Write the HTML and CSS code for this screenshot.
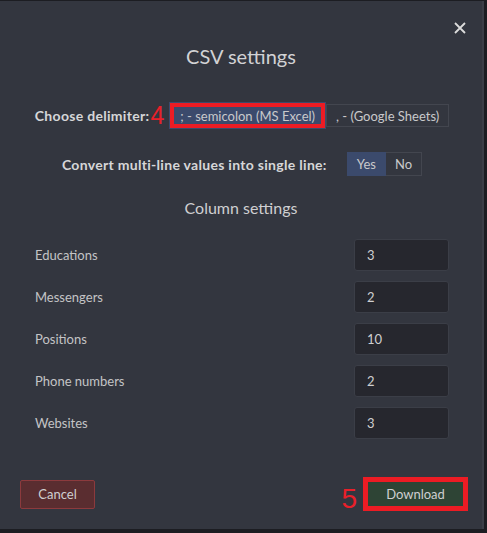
FILE: index.html
```html
<!DOCTYPE html>
<html lang="en">
<head>
    <meta charset="UTF-8">
    <meta name="viewport" content="width=device-width, initial-scale=1.0">
    <title>CSV settings</title>
    <link rel="stylesheet" href="styles.css">
</head>
<body>
    <div class="modal">
        <div class="modal-top">
            <button class="close" title="Close">
                <svg width="12" height="12" viewBox="0 0 12 12"><path d="M1 1 L11 11 M11 1 L1 11" stroke="#dcdcdc" stroke-width="1.8" fill="none"/></svg>
            </button>
        </div>
        <h2 class="title">CSV settings</h2>

        <div class="option-row delimiter-row">
            <span class="option-label">Choose delimiter:</span>
            <span class="mark">4</span>
            <div class="btn-group">
                <button class="seg active marked">; - semicolon (MS Excel)</button>
                <button class="seg">, - (Google Sheets)</button>
            </div>
        </div>

        <div class="option-row toggle-row">
            <span class="option-label">Convert multi-line values into single line:</span>
            <div class="btn-group bordered">
                <button class="seg active">Yes</button>
                <button class="seg">No</button>
            </div>
        </div>

        <h3 class="subtitle">Column settings</h3>

        <div class="columns">
            <div class="col-row"><label>Educations</label><input type="text" value="3"></div>
            <div class="col-row"><label>Messengers</label><input type="text" value="2"></div>
            <div class="col-row"><label>Positions</label><input type="text" value="10"></div>
            <div class="col-row"><label>Phone numbers</label><input type="text" value="2"></div>
            <div class="col-row"><label>Websites</label><input type="text" value="3"></div>
        </div>

        <div class="footer">
            <button class="btn cancel">Cancel</button>
            <div class="footer-right">
                <span class="mark">5</span>
                <button class="btn download">Download</button>
            </div>
        </div>
    </div>
</body>
</html>
```

FILE: styles.css
```css
body {
    margin: 0;
    background-color: #1c1d22;
    font-family: Lato, "Open Sans", sans-serif;
    color: #c4c4c6;
}
.modal {
    box-sizing: border-box;
    width: 484px;
    height: 528px;
    margin-top: 1px;
    background-color: #33363f;
    border-right: 2px solid #3b3e47;
    display: flex;
    flex-direction: column;
}
.modal-top {
    display: flex;
    justify-content: flex-end;
    padding: 21px 16px 0 0;
}
.close {
    background: none;
    border: none;
    padding: 0;
    width: 12px;
    height: 12px;
    cursor: pointer;
}
.close svg {
    display: block;
}
.title {
    margin: 10px 0 0;
    font-size: 20px;
    font-weight: normal;
    line-height: 24px;
    text-align: center;
    color: #d2d2d4;
}
.option-row {
    display: flex;
    justify-content: center;
    align-items: center;
    padding-left: 2px;
}
.delimiter-row {
    margin-top: 34px;
}
.toggle-row {
    margin-top: 23px;
}
.option-label {
    font-weight: bold;
    font-size: 14px;
    letter-spacing: 0.3px;
    color: #d6d6d8;
}
.toggle-row .option-label {
    margin-right: 20px;
}
.mark {
    font-family: "Liberation Sans", sans-serif;
    font-size: 25px;
    line-height: 25px;
    color: #e8202a;
}
.delimiter-row .mark {
    margin: 0 5px 0 1px;
}
.btn-group {
    display: flex;
    align-items: center;
}
.seg {
    font-family: Lato, "Open Sans", sans-serif;
    font-size: 13px;
    color: #c9c9cb;
    background: transparent;
    border: 1px solid #43464f;
    height: 23px;
    padding: 0 9px;
    cursor: pointer;
}
.seg.active {
    background-color: #3b4a6c;
    border-color: #3b4a6c;
}
.seg.marked {
    height: 27px;
    padding: 0 10px;
    box-shadow: inset 0 0 0 4px #ec1c24;
}
.bordered .seg {
    height: 24px;
    padding: 0 9px;
}
.bordered .seg + .seg {
    border-left: none;
}
.subtitle {
    margin: 22px 0 0;
    font-size: 16px;
    font-weight: normal;
    line-height: 20px;
    text-align: center;
    color: #cfcfd1;
}
.columns {
    margin-top: 21px;
    padding: 0 33px 0 35px;
    display: flex;
    flex-direction: column;
    gap: 10px;
}
.col-row {
    display: flex;
    justify-content: space-between;
    align-items: center;
}
.col-row label {
    font-size: 13px;
    color: #c4c4c6;
}
.col-row input {
    box-sizing: border-box;
    width: 95px;
    height: 32px;
    padding: 0 12px;
    background-color: #26272e;
    border: 1px solid #3b3e47;
    border-radius: 3px;
    font-family: Lato, "Open Sans", sans-serif;
    font-size: 13px;
    color: #cfcfd1;
    outline: none;
}
.footer {
    margin-top: auto;
    margin-bottom: 18px;
    padding: 0 14px 0 20px;
    display: flex;
    justify-content: space-between;
    align-items: center;
}
.footer-right {
    display: flex;
    align-items: flex-end;
    gap: 6px;
}
.footer-right .mark {
    font-size: 28px;
    line-height: 24px;
}
.btn {
    font-family: Lato, "Open Sans", sans-serif;
    font-size: 13px;
    color: #cfcfd1;
    cursor: pointer;
    border-radius: 2px;
}
.cancel {
    width: 75px;
    height: 29px;
    background-color: #5a2d30;
    border: 1px solid #8c3a3d;
}
.download {
    width: 105px;
    height: 34px;
    background-color: #2e4435;
    border: none;
    border-radius: 0;
    box-shadow: inset 0 0 0 5px #ec1c24;
}
```
